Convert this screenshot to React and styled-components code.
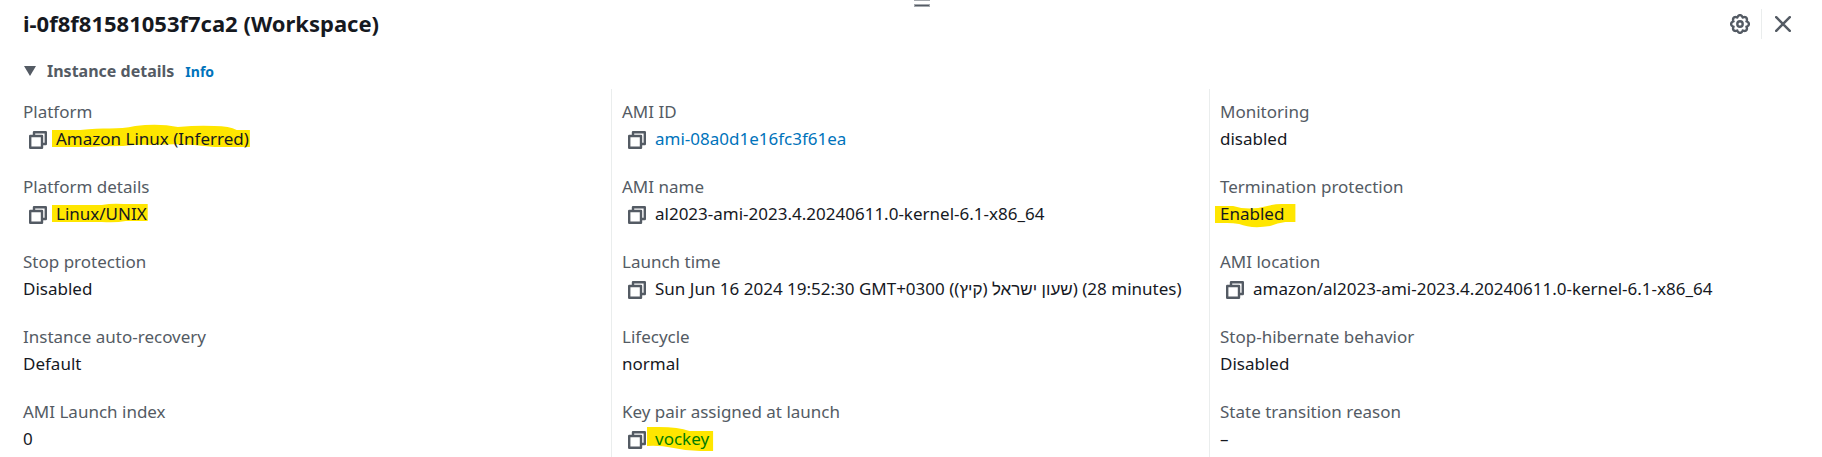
import React from "react";
import styled, { createGlobalStyle } from "styled-components";

const GlobalStyle = createGlobalStyle`
  * { box-sizing: border-box; }
  body {
    margin: 0;
    background: #fff;
    color: #16191f;
    font: 400 17px/27px "Noto Sans", "Liberation Sans", sans-serif;
  }
  button { font: inherit; color: inherit; background: none; border: 0; padding: 0; cursor: pointer; }
  svg { display: block; }
`;

const Panel = styled.section`
  position: relative;
`;

const DragHandle = styled.button`
  position: absolute;
  top: 0;
  left: 50%;
  width: 16px;
  height: 7px;
  margin-left: 3px;
`;

const Header = styled.header`
  display: flex;
  align-items: center;
  justify-content: space-between;
  height: 48px;
  padding: 0 31px 0 23px;
`;

const Title = styled.h2`
  margin: 0;
  padding-bottom: 2px;
  font-size: 22px;
  line-height: 28px;
  font-weight: 700;
`;

const Actions = styled.div`
  display: flex;
  align-items: center;
  color: #545b64;
`;

const IconButton = styled.button`
  display: flex;
`;

const Separator = styled.span`
  width: 1px;
  height: 30px;
  margin: 0 13px 0 11px;
  background: #eaeded;
`;

const SectionHeading = styled.div`
  display: flex;
  align-items: center;
  gap: 11px;
  height: 41px;
  padding: 5px 24px 0;
`;

const Toggle = styled.button`
  display: flex;
  align-items: center;
  gap: 11px;
  color: #545b64;
  font-size: 16px;
  font-weight: 700;
`;

const Link = styled.a`
  color: ${(p) => (p.$marked ? "#007d00" : "#0073bb")};
  text-decoration: none;
`;

const InfoLink = styled(Link)`
  font-size: 14px;
  font-weight: 700;
`;

const Columns = styled.div`
  display: grid;
  grid-template-columns: repeat(3, minmax(0, 1fr));
  padding: 0 15px 0 13px;
`;

const Column = styled.dl`
  display: flex;
  flex-direction: column;
  gap: 21px;
  margin: 0;
  padding: 9px 0 5px 10px;
  & + & { border-left: 1px solid #eaeded; }
`;

const Term = styled.dt`
  color: #545b64;
`;

const Value = styled.dd`
  display: flex;
  align-items: center;
  margin: 0;
`;

const CopyButton = styled.button`
  display: flex;
  margin: 2px 9px 0 6px;
`;

const ValueText = styled.span`
  position: relative;
  isolation: isolate;
  white-space: nowrap;
`;

const Marker = styled.svg`
  position: absolute;
  z-index: -1;
  top: 0;
  left: ${(p) => -p.$left}px;
  width: calc(100% + ${(p) => p.$left + p.$right}px);
  height: 27px;
  overflow: visible;
  fill: #ffe600;
`;

const MARKS = {
  platform: { left: 4, right: 1, box: "0 0 195 27", d: "M0 5H28C50 2 65 5 82 1Q105-2 124 2Q145 0 160 1Q175 1 182 5H195V22H160Q130 18 100 20Q85 19 70 21Q50 21 38 22H0Z" },
  details: { left: 4, right: 1, box: "0 0 96 27", d: "M0 5H50Q60 3 72 4H96V21H74Q64 23 50 22H0Z" },
  termination: { left: 5, right: 11, box: "0 0 80 27", d: "M0 6H18Q34 11 52 6Q60 4 66 4H80V22H70Q62 23 55 26Q36 29 24 24Q18 23 12 23H0Z" },
  key: { left: 8, right: 4, box: "0 0 67 27", d: "M0 2H12Q32 2 43 6H67V26H54Q40 26 27 23Q12 20 0 21Z" },
};

const COLUMNS = [
  [
    { label: "Platform", value: "Amazon Linux (Inferred)", copy: true, mark: "platform" },
    { label: "Platform details", value: "Linux/UNIX", copy: true, mark: "details" },
    { label: "Stop protection", value: "Disabled" },
    { label: "Instance auto-recovery", value: "Default" },
    { label: "AMI Launch index", value: "0" },
  ],
  [
    { label: "AMI ID", value: "ami-08a0d1e16fc3f61ea", copy: true, link: true },
    { label: "AMI name", value: "al2023-ami-2023.4.20240611.0-kernel-6.1-x86_64", copy: true },
    { label: "Launch time", value: "Sun Jun 16 2024 19:52:30 GMT+0300 (שעון ישראל (קיץ)) (28 minutes)", copy: true },
    { label: "Lifecycle", value: "normal" },
    { label: "Key pair assigned at launch", value: "vockey", copy: true, link: true, mark: "key" },
  ],
  [
    { label: "Monitoring", value: "disabled" },
    { label: "Termination protection", value: "Enabled", mark: "termination" },
    { label: "AMI location", value: "amazon/al2023-ami-2023.4.20240611.0-kernel-6.1-x86_64", copy: true },
    { label: "Stop-hibernate behavior", value: "Disabled" },
    { label: "State transition reason", value: "–" },
  ],
];

const gearPath =
  Array.from({ length: 128 }, (_, i) => {
    const a = (i / 128) * Math.PI * 2;
    const r = 7 + 1.9 * Math.abs(Math.cos(4 * a));
    return `${i ? "L" : "M"}${(10 + r * Math.cos(a)).toFixed(2)} ${(10 + r * Math.sin(a)).toFixed(2)}`;
  }).join("") + "Z";

const GearIcon = () => (
  <svg width="20" height="20" fill="none" stroke="currentColor" strokeWidth="2.4" strokeLinejoin="round" aria-hidden="true">
    <path d={gearPath} />
    <circle cx="10" cy="10" r="2.7" />
  </svg>
);

const CloseIcon = () => (
  <svg width="16" height="16" fill="none" stroke="currentColor" strokeWidth="2.5" strokeLinecap="round" aria-hidden="true">
    <path d="M1.2 1.2L14.8 14.8M14.8 1.2L1.2 14.8" />
  </svg>
);

const CopyIcon = () => (
  <svg width="18" height="18" fill="none" stroke="#545b64" strokeWidth="2.4" strokeLinejoin="round" aria-hidden="true">
    <path d="M1.2 5H13V16.8H1.2Z" />
    <path d="M5 5V1.2H16.8V13H13" />
  </svg>
);

function Field({ label, value, copy, link, mark }) {
  const m = MARKS[mark];
  return (
    <div>
      <Term>{label}</Term>
      <Value>
        {copy && <CopyButton type="button" aria-label={`Copy ${label}`}><CopyIcon /></CopyButton>}
        <ValueText>
          {m && (
            <Marker $left={m.left} $right={m.right} viewBox={m.box} preserveAspectRatio="none" aria-hidden="true">
              <path d={m.d} />
            </Marker>
          )}
          {link ? <Link href="#" $marked={!!m}>{value}</Link> : value}
        </ValueText>
      </Value>
    </div>
  );
}

export default function App() {
  return (
    <Panel>
      <GlobalStyle />
      <DragHandle type="button" aria-label="Resize panel">
        <svg width="16" height="7" aria-hidden="true">
          <path d="M0 0H16V1H0Z" fill="#a5a9ae" />
          <path d="M0 4H16V7H0Z" fill="#a5a9ae" />
          <path d="M1 5H15V6H1Z" fill="#545b64" />
        </svg>
      </DragHandle>
      <Header>
        <Title>i-0f8f81581053f7ca2 (Workspace)</Title>
        <Actions>
          <IconButton type="button" aria-label="Settings"><GearIcon /></IconButton>
          <Separator />
          <IconButton type="button" aria-label="Close"><CloseIcon /></IconButton>
        </Actions>
      </Header>
      <SectionHeading>
        <Toggle type="button" aria-expanded="true">
          <svg width="12" height="10" fill="currentColor" aria-hidden="true"><path d="M0 0H12L6 10Z" /></svg>
          Instance details
        </Toggle>
        <InfoLink href="#">Info</InfoLink>
      </SectionHeading>
      <Columns>
        {COLUMNS.map((fields, i) => (
          <Column key={i}>
            {fields.map((f) => <Field key={f.label} {...f} />)}
          </Column>
        ))}
      </Columns>
    </Panel>
  );
}
